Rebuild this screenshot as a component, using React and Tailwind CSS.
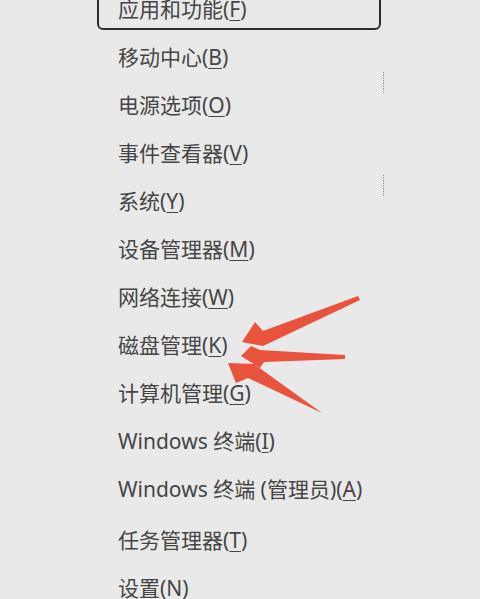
const items = [
  { label: '应用和功能', key: 'F' },
  { label: '移动中心', key: 'B' },
  { label: '电源选项', key: 'O' },
  { label: '事件查看器', key: 'V' },
  { label: '系统', key: 'Y' },
  { label: '设备管理器', key: 'M' },
  { label: '网络连接', key: 'W' },
  { label: '磁盘管理', key: 'K' },
  { label: '计算机管理', key: 'G' },
  { label: 'Windows 终端', key: 'I' },
  { label: 'Windows 终端 (管理员)', key: 'A' },
  { label: '任务管理器', key: 'T' },
  { label: '设置', key: 'N' },
];

const MenuLabel = ({ item }) => (
  <span>
    {item.label}(<span className="underline underline-offset-[3px] decoration-1">{item.key}</span>)
  </span>
);

const Arrows = () => (
  <svg className="absolute left-0 top-0 pointer-events-none" width="480" height="599" viewBox="0 0 480 599">
    <g fill="#e9533d">
      {/* top arrow */}
      <polygon points="358,296 263,331 255,322 242,342 263,346 360,300" />
      {/* middle arrow */}
      <polygon points="345,355 260,350 251,346 241,356 260,368 264,362 345,359" />
      {/* bottom arrow */}
      <polygon points="228,363 254,364 322,413 248,378 236,383" />
    </g>
  </svg>
);

export default function App() {
  return (
    <div
      className="relative w-[480px] h-[599px] overflow-hidden bg-[#e9e9e9] text-[#454545] text-[21px]"
      style={{ fontFamily: '"Noto Sans", "Noto Sans CJK SC", sans-serif' }}
    >
      <div className="mt-[-14px] pl-[97px] flex flex-col">
        {items.map((item, i) =>
          i === 0 ? (
            <div key={i} className="h-12 flex items-center">
              <div className="w-[284px] h-10 border-2 border-[#2e2e2e] rounded-md flex items-center pl-[19px]">
                <MenuLabel item={item} />
              </div>
            </div>
          ) : (
            <div key={i} className={`h-12 flex items-center pl-[21px] ${i === 11 ? 'mt-[3px]' : ''}`}>
              <MenuLabel item={item} />
            </div>
          )
        )}
      </div>

      {/* scrollbar hints */}
      <div className="absolute left-[383px] top-[72px] h-[21px] border-l border-dotted border-[#8a8a8a]" />
      <div className="absolute left-[383px] top-[175px] h-[21px] border-l border-dotted border-[#8a8a8a]" />

      <Arrows />
    </div>
  );
}
